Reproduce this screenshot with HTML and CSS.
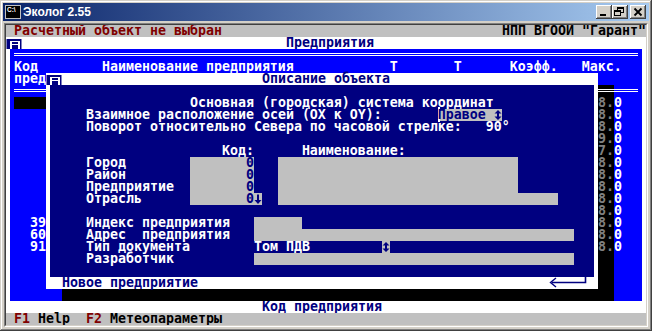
FILE: index.html
```html
<!DOCTYPE html>
<html lang="ru">
<head>
  <meta charset="utf-8">
  <title>Эколог 2.55</title>
  <link rel="stylesheet" href="styles.css">
</head>
<body>

  <div class="window">
    <div class="titlebar">
      <svg class="app-icon" width="16" height="16" viewBox="0 0 16 16">
        <rect x="0" y="1" width="16" height="14" fill="#c0c0c0"/>
        <rect x="1" y="2" width="14" height="12" fill="#000"/>
        <text x="2" y="8" font-size="6.5" font-family="Liberation Sans, sans-serif" font-weight="bold" fill="#fff">C:\</text>
      </svg>
      <span class="title">Эколог 2.55</span>
      <div class="caption-btns">
        <span class="cbtn"><svg width="16" height="14" viewBox="0 0 16 14"><rect x="4" y="9" width="6" height="2"/></svg></span>
        <span class="cbtn"><svg width="16" height="14" viewBox="0 0 16 14"><rect x="5" y="2" width="7" height="2"/><rect x="11" y="4" width="1" height="4"/><rect x="9" y="7" width="3" height="1"/><rect x="5" y="4" width="1" height="1"/><rect x="2" y="5" width="7" height="2"/><rect x="2" y="7" width="1" height="4"/><rect x="8" y="7" width="1" height="4"/><rect x="2" y="10" width="7" height="1"/></svg></span>
        <span class="cbtn close"><svg width="16" height="14" viewBox="0 0 16 14"><path d="M4.5 3.5l7 7M11.5 3.5l-7 7" stroke="#000" stroke-width="1.8"/></svg></span>
      </div>
    </div>

    <div class="client">
      <div class="screen">

        <div class="statusline"><span class="hint">Расчетный объект не выбран</span><span>НПП ВГООИ "Гарант"</span></div>

        <!-- окно списка предприятий -->
        <div class="win">
          <div class="win-title">
            <svg class="close-box" width="16" height="12" viewBox="0 0 16 12"><rect x="0.5" y="2" width="15" height="10" fill="#000080"/><path d="M4 4h10v8h-2V8H6v4H4zM6 5v2h6V5z" fill="#fff" fill-rule="evenodd"/></svg>
            <span>Предприятия</span>
          </div>
          <div class="win-body">
            <div class="dbl"></div>
            <div class="ln">Код        Наименование предприятия            Т       Т      Коэфф.   Макс.</div>
            <div class="ln">пред</div>
            <div class="dbl"></div>
            <div class="row"><span class="code sel"></span><span class="val">8.0</span></div>
            <div class="row"><span class="code"></span><span class="val">8.0</span></div>
            <div class="row"><span class="code"></span><span class="val">8.0</span></div>
            <div class="row"><span class="code"></span><span class="val">9.0</span></div>
            <div class="row"><span class="code"></span><span class="val">7.0</span></div>
            <div class="row"><span class="code"></span><span class="val">8.0</span></div>
            <div class="row"><span class="code"></span><span class="val">8.0</span></div>
            <div class="row"><span class="code"></span><span class="val">8.0</span></div>
            <div class="row"><span class="code"></span><span class="val">8.0</span></div>
            <div class="row"><span class="code"></span><span class="val">8.0</span></div>
            <div class="row"><span class="code">39</span><span class="val">8.0</span></div>
            <div class="row"><span class="code">60</span><span class="val">8.0</span></div>
            <div class="row"><span class="code">91</span><span class="val">8.0</span></div>
          </div>
          <div class="win-foot">Код предприятия</div>
        </div>

        <!-- тень диалога -->
        <div class="shade shade-right">
          <div class="dbl"></div>
          <div class="ln">8.</div>
          <div class="ln">8.</div>
          <div class="ln">8.</div>
          <div class="ln">9.</div>
          <div class="ln">7.</div>
          <div class="ln">8.</div>
          <div class="ln">8.</div>
          <div class="ln">8.</div>
          <div class="ln">8.</div>
          <div class="ln">8.</div>
          <div class="ln">8.</div>
          <div class="ln">8.</div>
          <div class="ln">8.</div>
        </div>
        <div class="shade shade-bottom"></div>

        <!-- диалог описания объекта -->
        <div class="dialog">
          <div class="dlg-title">
            <svg class="close-box" width="16" height="12" viewBox="0 0 16 12"><rect x="0.5" y="2" width="15" height="10" fill="#000080"/><path d="M4 4h10v8h-2V8H6v4H4zM6 5v2h6V5z" fill="#fff" fill-rule="evenodd"/></svg>
            <span>Описание объекта</span>
          </div>
          <div class="dlg-body">
            <div class="ln"></div>
            <div class="ln">                 Основная (городская) система координат</div>
            <div class="ln">    Взаимное расположение осей (OX к OY):       <span class="fld combo"><span class="cur">П</span>равое <svg class="arr" width="8" height="12" viewBox="0 0 8 12"><path d="M4 1L7.5 4.5H5V7.5H7.5L4 11L0.5 7.5H3V4.5H0.5Z"/></svg></span></div>
            <div class="ln">    Поворот относительно Севера по часовой стрелке:   90°</div>
            <div class="ln"></div>
            <div class="ln">                     Код:      Наименование:</div>
            <div class="ln">    Город        <span class="fld w8">0</span>   <span class="fld w30"></span></div>
            <div class="ln">    Район        <span class="fld w8">0</span>   <span class="fld w30"></span></div>
            <div class="ln">    Предприятие  <span class="fld w8">0</span>   <span class="fld w30"></span></div>
            <div class="ln">    Отрасль      <span class="fld w9">0<svg class="arr" width="8" height="12" viewBox="0 0 8 12"><path d="M3 1.5H5V7H7.5L4 11L0.5 7H3Z"/></svg></span>  <span class="fld w35"></span></div>
            <div class="ln"></div>
            <div class="ln">    Индекс предприятия   <span class="fld w6"></span></div>
            <div class="ln">    Адрес  предприятия   <span class="fld w40"></span></div>
            <div class="ln">    Тип документа        Том ПДВ         <span class="fld w1"><svg class="arr" width="8" height="12" viewBox="0 0 8 12"><path d="M4 1L7.5 4.5H5V7.5H7.5L4 11L0.5 7.5H3V4.5H0.5Z"/></svg></span></div>
            <div class="ln">    Разработчик          <span class="fld w40"></span></div>
          </div>
          <div class="dlg-foot">
            <span>Новое предприятие</span>
            <svg class="enter" width="40" height="12" viewBox="0 0 40 12"><path d="M8 1L2.5 5.5L8 10" fill="none" stroke="#000080" stroke-width="1.4"/><path d="M4 5.5H37.5V0" fill="none" stroke="#000080" stroke-width="1.6"/></svg>
          </div>
        </div>

        <div class="keybar"><span class="key">F1</span> Help  <span class="key">F2</span> Метеопараметры</div>

      </div>
    </div>
  </div>

</body>
</html>
```

FILE: styles.css
```css
html, body {
  margin: 0;
  height: 100%;
  overflow: hidden;
}

body {
  background-color: #d4d0c8;
  font-family: "Liberation Sans", Arial, sans-serif;
}

.window {
  width: 652px;
  height: 331px;
  box-sizing: border-box;
  padding: 3px 3px 4px;
  background-color: #d4d0c8;
  box-shadow: inset -1px -1px #404040, inset 1px 1px #d4d0c8,
              inset -2px -2px #808080, inset 2px 2px #fff;
}

.titlebar {
  height: 18px;
  display: flex;
  align-items: center;
  padding: 0 3px 0 2px;
  background: linear-gradient(to right, #0a246a, #a6caf0);
  color: white;
}

.title {
  font-family: "Liberation Sans", Arial, sans-serif;
  font-weight: bold;
  font-size: 12px;
}

.app-icon {
  margin-right: 2px;
  flex: none;
}

.caption-btns {
  margin-left: auto;
  display: flex;
}

.cbtn {
  width: 16px;
  height: 14px;
  background-color: #d4d0c8;
  box-shadow: inset -1px -1px #404040, inset 1px 1px #fff,
              inset -2px -2px #808080, inset 2px 2px #d4d0c8;
}

.cbtn svg {
  display: block;
}

.cbtn.close {
  margin-left: 2px;
}

.client {
  margin: 2px 1px 0;
  border: 1px solid;
  border-color: #808080 #fff #fff #808080;
}

/* текстовый экран 80x25, ячейка 8x12 */
.screen {
  width: 640px;
  height: 300px;
  border: 1px solid;
  border-color: #404040 #d4d0c8 #d4d0c8 #404040;
  background-color: black;
  display: grid;
  grid-template-columns: repeat(80, 8px);
  grid-template-rows: repeat(25, 12px);
  overflow: hidden;
  font-family: "DejaVu Sans Mono", "Liberation Mono", monospace;
  font-size: 13.29px;
  font-weight: bold;
  line-height: 12px;
}

.statusline, .keybar, .ln, .row, .win-title span, .dlg-title span, .win-foot, .dlg-foot span {
  white-space: pre;
}

.statusline {
  grid-row: 1;
  grid-column: 1 / -1;
  background-color: #c0c0c0;
  color: black;
  display: flex;
  justify-content: space-between;
  padding-left: 8px;
}

.statusline .hint {
  color: #800000;
}

.win {
  grid-row: 2 / 25;
  grid-column: 1 / -1;
  display: flex;
  flex-direction: column;
}

.win-title, .dlg-title {
  height: 12px;
  display: grid;
  grid-template-columns: 16px 1fr 8px;
  background-color: white;
  color: #000080;
  text-align: center;
}

.close-box {
  display: block;
}

.win-body {
  flex: 1;
  background-color: #0000ff;
  color: white;
  border: solid white;
  border-width: 0 4px;
  padding: 0 4px;
}

.win-foot {
  height: 12px;
  background-color: white;
  color: #000080;
  text-align: center;
  padding-right: 8px;
}

.ln {
  height: 12px;
}

.row {
  height: 12px;
  display: flex;
}

.code {
  width: 32px;
  text-align: right;
}

.code.sel {
  background-color: black;
}

.val {
  margin-left: auto;
  width: 40px;
}

.dbl {
  height: 12px;
}

.dbl::before {
  content: "";
  display: block;
  padding-top: 4px;
  height: 2px;
  border-bottom: 1px solid white;
  background: linear-gradient(white, white) 0 4px / 100% 1px no-repeat;
}

.shade {
  background-color: black;
  color: #808080;
}

.shade-right {
  grid-row: 6 / 23;
  grid-column: 75 / 77;
}

.shade-bottom {
  grid-row: 23;
  grid-column: 8 / 77;
}

.dialog {
  grid-row: 5 / 23;
  grid-column: 6 / 75;
  display: flex;
  flex-direction: column;
}

.dlg-body {
  flex: 1;
  background-color: #000080;
  color: white;
  border: solid white;
  border-width: 0 4px;
  padding: 0 4px;
}

.dlg-foot {
  height: 12px;
  display: flex;
  justify-content: space-between;
  align-items: center;
  padding: 0 10px 0 16px;
  background-color: white;
  color: #000080;
}

.enter {
  display: block;
}

.fld {
  display: inline-block;
  vertical-align: top;
  height: 12px;
  background-color: #c0c0c0;
  color: #000080;
  text-align: right;
}

.fld.combo {
  text-align: left;
}

.cur {
  box-shadow: inset 2px 0 #fff;
}

.arr {
  display: inline-block;
  vertical-align: top;
  fill: #000080;
}

.w1 { width: 8px; }
.w6 { width: 48px; }
.w8 { width: 64px; }
.w9 { width: 72px; }
.w30 { width: 240px; }
.w35 { width: 280px; }
.w40 { width: 320px; }

.keybar {
  grid-row: 25;
  grid-column: 1 / -1;
  background-color: #c0c0c0;
  color: black;
  padding-left: 8px;
}

.keybar .key {
  color: #800000;
}
```
